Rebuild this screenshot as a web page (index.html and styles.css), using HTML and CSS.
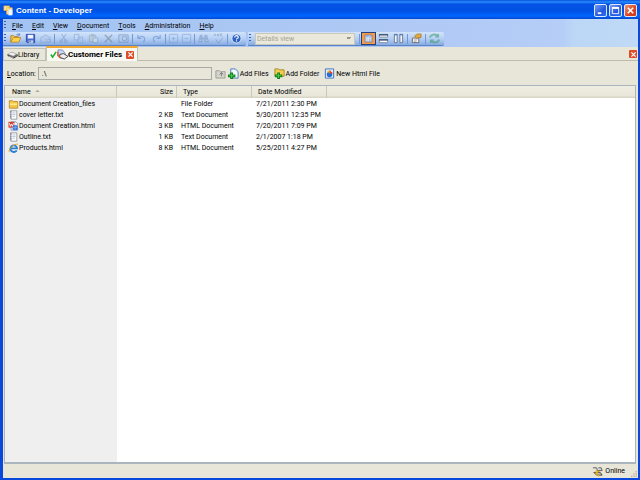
FILE: index.html
```
<!DOCTYPE html>
<html lang="en">
<head>
<meta charset="utf-8">
<title>Content - Developer</title>
<link rel="stylesheet" href="styles.css">
</head>
<body>
<svg class="defs" aria-hidden="true">
<symbol id="folder" viewBox="0 0 12 12"><path d="M1 2h4l1 1h5v8H1z" fill="#f4c643" stroke="#b48a26"/><path d="M1.500 5.500h9v1.500h-9z" fill="#fff0a0"/></symbol>
<symbol id="txt" viewBox="0 0 12 12"><path d="M3 1h7v10H3z" fill="#fff" stroke="#8d9198"/><path d="M2.500 1v10" stroke="#687686" stroke-width="1.500" stroke-dasharray="1 1"/><path d="M4.500 3.500h4m-4 2h4m-4 2h3" stroke="#8a9fc0" stroke-width=".7"/></symbol>
<symbol id="html" viewBox="0 0 12 12"><path d="M3 1h6l2 2v8H3z" fill="#eef4ff" stroke="#7d94bd"/><path d="M0 1h7v7H0z" fill="#d33b2d"/><path d="M1 2.500l1.200 4 1.300-3 1.300 3 1.200-4" fill="none" stroke="#fff"/><circle cx="8" cy="8" r="3.200" fill="#3873d2"/><path d="M5 8h6M8 5v6" stroke="#a9d3ff" stroke-width=".6"/></symbol>
<symbol id="ie" viewBox="0 0 12 12"><path d="M9.800 8.800A4 4 0 1 1 10.300 6.500H3" fill="none" stroke="#287fd6" stroke-width="2.200"/><path d="M1 11C-1 8 7 0 11.500 1.500" fill="none" stroke="#e3a72c" stroke-width="1.200"/></symbol>
<symbol id="disk" viewBox="0 0 12 12"><path d="M1.500 1.500h9v9h-8l-1-1z" fill="#4a6ed0" stroke="#2b469f"/><path d="M3 2h6v4H3z" fill="#eef3ff"/><path d="M4 8h5v3H4z" fill="#b9cbe9"/><path d="M5 8.500h1V10H5z" fill="#2b469f"/></symbol>
<symbol id="stack" viewBox="0 0 12 12"><path d="M0 6l5-3 7 3-4 4-7-2z" fill="#777"/><path d="M1 5.500l4-2 5 2-3 2z" fill="#eee"/><path d="M1 7l6 3 5-3" fill="none" stroke="#333"/><path d="M2 8l5 2" stroke="#ddd" stroke-width=".7"/></symbol>
<symbol id="close" viewBox="0 0 10 10"><path d="M2 2l6 6m0-6L2 8" stroke="#fff" stroke-width="1.800"/></symbol>
<symbol id="app" viewBox="0 0 12 12"><path d="M1 1h6v5H1zM4 3h6v7H4z" fill="#ffe99c" stroke="#e3ad42" stroke-width=".8"/><path d="M6 5h4v6H6z" fill="#fff" stroke="#c9dcf4" stroke-width=".7"/></symbol>
</svg>
<header class="titlebar">
<svg class="icon"><use href="#app"/></svg>
<h1>Content - Developer</h1>
<button class="win" aria-label="Minimize"><svg viewBox="0 0 10 10"><path d="M2 8h4" stroke="#fff" stroke-width="2"/></svg></button>
<button class="win" aria-label="Maximize"><svg viewBox="0 0 10 10"><path d="M1.500 2.500h7v6h-7z" fill="none" stroke="#fff"/><path d="M1 2h8" stroke="#fff" stroke-width="2"/></svg></button>
<button class="win red" aria-label="Close"><svg><use href="#close"/></svg></button>
</header>
<div class="frame">
<div class="bars">
<nav class="menu"><span class="grip"></span>
<button><u>F</u>ile</button><button><u>E</u>dit</button><button><u>V</u>iew</button><button><u>D</u>ocument</button><button><u>T</u>ools</button><button><u>A</u>dministration</button><button><u>H</u>elp</button>
</nav>
<div class="tools">
<div class="strip"><span class="grip"></span>
<button aria-label="Open"><svg viewBox="0 0 12 12"><path d="M1 10V3h3l1 1h4v2" fill="#fbd566" stroke="#a87917"/><path d="M1 10l2.500-5H12l-2.500 5z" fill="#ffd352" stroke="#b07e18" stroke-width=".8"/><path d="M7 2q2-2 3.500 0V.500m0 2H8.500" fill="none" stroke="#426fb4" stroke-width=".8"/></svg></button>
<button aria-label="Save"><svg><use href="#disk"/></svg></button>
<button aria-label="Check in" disabled><svg viewBox="0 0 12 12"><path d="M1 5l5-3 5 3v5H1zM5 6l4 4M8 7h3v3" fill="#b7cae8" stroke="#7897c8"/></svg></button>
<i class="sep"></i>
<button aria-label="Cut" disabled><svg viewBox="0 0 12 12" fill="none" stroke="#5e80ba"><path d="M4 1l4 7M9 1L4 8"/><circle cx="3.500" cy="9" r="1.500"/><circle cx="8.500" cy="9" r="1.500"/></svg></button>
<button aria-label="Copy" disabled><svg viewBox="0 0 12 12" fill="#cbdcf5" stroke="#7697cb"><path d="M1.500 1.500h5v6h-5zM5.500 4.500h5v6h-5z"/><path d="M7 6.500h2M7 8.500h2"/></svg></button>
<button aria-label="Paste" disabled><svg viewBox="0 0 12 12" fill="#c4c9bd" stroke="#8298ad"><path d="M1.500 2.500h7v7h-7zM3.500 1.500h3v2h-3z"/><path d="M5.500 5.500h5v5h-5z" fill="#dce6f3"/></svg></button>
<button aria-label="Delete" disabled><svg viewBox="0 0 12 12"><path d="M2 2l8 8M10 2L2 10" stroke="#72777c" stroke-width="1.500"/></svg></button>
<button aria-label="Preview" disabled><svg viewBox="0 0 12 12" fill="#b7cde8" stroke="#5b7ca9"><path d="M1 2h10v8H1z"/><circle cx="7" cy="6" r="2.500"/></svg></button>
<i class="sep"></i>
<button aria-label="Undo" disabled><svg viewBox="0 0 12 12" fill="none" stroke="#5381c8" stroke-width="1.300"><path d="M2 2v4h4M2 6c5-5 10-1 6 4"/></svg></button>
<button aria-label="Redo" disabled><svg viewBox="0 0 12 12" fill="none" stroke="#5381c8" stroke-width="1.300"><path d="M10 2v4H6m4 0C5 1 0 5 4 10"/></svg></button>
<i class="sep"></i>
<button class="slim" aria-label="Expand" disabled><svg viewBox="0 0 12 12" fill="none" stroke="#6f94d0"><path d="M1.500 1.500h9v9h-9zM6 4v4M4 6h4"/></svg></button>
<button class="slim" aria-label="Collapse" disabled><svg viewBox="0 0 12 12" fill="none" stroke="#6f94d0"><path d="M1.500 1.500h9v9h-9zM4 6h4"/></svg></button>
<i class="sep"></i>
<button aria-label="Find" disabled><svg viewBox="0 0 12 12" fill="#7893be"><path d="M2 2h3v3h2V2h3l2 8H7V7H5v3H0z"/><path d="M1.500 8h2M8.500 8h2" stroke="#c8dbf5"/></svg></button>
<button aria-label="Spelling" disabled><svg viewBox="0 0 12 12" fill="none" stroke="#6988ae"><path d="M1 3l1-2 1 2M5 1v2h1V1M10 1H8v2h2M3 7l3 4 5-6" /></svg></button>
<i class="sep"></i>
<button aria-label="Help"><svg viewBox="0 0 12 12"><circle cx="6" cy="6" r="5" fill="#2d62c5" stroke="#e4edfb"/><path d="M4 5c0-3 4-2.500 4-.500C8 6 6 5.500 6 7M6 8v1.200" stroke="#fff" fill="none" stroke-width="1.200"/></svg></button>
</div>
<div class="strip"><span class="grip"></span>
<select aria-label="View" disabled><option>Details view</option></select>
<i class="sep"></i>
<button class="on" aria-label="Details"><svg viewBox="0 0 12 12"><path d="M1.500 1.500h9v9h-9z" fill="#fff" stroke="#5472a5"/><path d="M2 3h8M4 2v8" stroke="#6b9ad8"/><path d="M6 5h3M6 7h3M6 9h3" stroke="#6289c0"/></svg></button>
<button aria-label="Split rows"><svg viewBox="0 0 12 12"><path d="M1.500 1.500h9v3h-9zM1.500 7.500h9v3h-9z" fill="#fff" stroke="#7d8ba1"/><path d="M1 2h10M1 7.500h10" stroke="#344869" stroke-width="1.500"/></svg></button>
<button aria-label="Split columns"><svg viewBox="0 0 12 12"><path d="M1.500 1.500h3v9h-3zM7.500 1.500h3v9h-3z" fill="#eff5ff" stroke="#65758f"/><path d="M1 2h4M7 2h4" stroke="#4775b4"/></svg></button>
<i class="sep"></i>
<button aria-label="Properties"><svg viewBox="0 0 12 12"><path d="M1.500 5.500h7v5h-7z" fill="#fff" stroke="#666"/><path d="M3 7.500h4M3 9h3" stroke="#777" stroke-width=".7"/><path d="M4 3l3-2h4v4H8L6 6z" fill="#e6a83a" stroke="#9b712a" stroke-width=".7"/></svg></button>
<i class="sep"></i>
<button aria-label="Refresh" disabled><svg viewBox="0 0 12 12" fill="none" stroke="#32945b" stroke-width="2"><path d="M1 5c1-4 6-4 8-2M10 1v3H7M11 7c-1 4-6 4-8 2M2 11V8h3"/></svg></button>
</div>
</div>
</div>
<div class="tabs">
<button class="tab"><svg class="icon"><use href="#stack"/></svg>Library</button>
<div class="tab active"><svg class="check" viewBox="0 0 8 10"><path d="M1 5l2 3 4-6" fill="none" stroke="#15ae27" stroke-width="1.700"/></svg><svg class="icon" viewBox="0 0 12 12"><path d="M1 1h5l3 4v5H4L1 7z" fill="#c9d6f5" stroke="#858baa"/><path d="M3 6l4-1 5 3-4 3-5-2z" fill="#eee" stroke="#444"/><path d="M1 3v4l3 3" stroke="#d55c38" fill="none" stroke-width="1.500"/></svg><span>Customer Files</span><button class="x" aria-label="Close tab"><svg><use href="#close"/></svg></button></div>
<button class="x last" aria-label="Close pane"><svg><use href="#close"/></svg></button>
</div>
<main class="page">
<div class="location">
<label for="loc"><u>L</u>ocation:</label><input id="loc" type="text" value=".\" readonly>
<button class="up" aria-label="Up" disabled><svg class="icon" viewBox="0 0 12 12"><path d="M1 3h4l1 1h5v7H1z" fill="#d5d4cc" stroke="#9c9c96"/><path d="M7 9V5M5 7l2-2 2 2" fill="none" stroke="#777"/></svg></button>
<button><svg class="icon" viewBox="0 0 12 12"><path d="M3 1h5l3 3v7H3z" fill="#f5f9ff" stroke="#3c78bd"/><path d="M4 5v7M0 8.500h8" stroke="#087b17" stroke-width="3"/><path d="M4 6v5M1 8.500h6" stroke="#50d34e"/></svg>Add Files</button>
<button><svg class="icon" viewBox="0 0 12 12"><path d="M1 1h4l1 1h5v7H1z" fill="#f3cf50" stroke="#a68325"/><path d="M5 5v7M1 8.500h8" stroke="#087b17" stroke-width="3"/><path d="M5 6v5M2 8.500h6" stroke="#50d34e"/></svg>Add Folder</button>
<button><svg class="icon" viewBox="0 0 12 12"><path d="M1.500 1h9v10h-9z" fill="#e7f0ff" stroke="#386dbb"/><circle cx="6" cy="7" r="3" fill="#286dd0"/><path d="M6 6V2l4 4z" fill="#e34525"/><path d="M3 3h3v3z" fill="#edb330"/></svg>New Html File</button>
</div>
<div class="list">
<table>
<colgroup><col class="c1"><col class="c2"><col class="c3"><col class="c4"><col></colgroup>
<thead><tr><th>Name <svg class="sort" viewBox="0 0 6 4"><path d="M0 4l3-3 3 3z" fill="#aaa99a"/></svg></th><th class="num">Size</th><th>Type</th><th>Date Modified</th><th class="rest"></th></tr></thead>
<tbody>
<tr><td><svg class="icon"><use href="#folder"/></svg>Document Creation_files</td><td class="num"></td><td>File Folder</td><td>7/21/2011 2:30 PM</td><td></td></tr>
<tr><td><svg class="icon"><use href="#txt"/></svg>cover letter.txt</td><td class="num">2 KB</td><td>Text Document</td><td>5/30/2011 12:35 PM</td><td></td></tr>
<tr><td><svg class="icon"><use href="#html"/></svg>Document Creation.html</td><td class="num">3 KB</td><td>HTML Document</td><td>7/20/2011 7:09 PM</td><td></td></tr>
<tr><td><svg class="icon"><use href="#txt"/></svg>Outline.txt</td><td class="num">1 KB</td><td>Text Document</td><td>2/1/2007 1:18 PM</td><td></td></tr>
<tr><td><svg class="icon"><use href="#ie"/></svg>Products.html</td><td class="num">8 KB</td><td>HTML Document</td><td>5/25/2011 4:27 PM</td><td></td></tr>
</tbody>
</table>
</div>
</main>
<footer class="status"><svg class="icon" viewBox="0 0 12 12"><path d="M1 2h4l1 3h5l-1-3H7" fill="#ddd" stroke="#555"/><path d="M2 7h7l2 3H5z" fill="#bbb" stroke="#444"/><path d="M4 5l3 1-3 2 4 3" fill="none" stroke="#dfab18" stroke-width="1.500"/></svg><span>Online</span><svg class="size" viewBox="0 0 8 8"><path d="M6 0h2v2H6zM3 3h2v2H3zM6 3h2v2H6zM0 6h2v2H0zM3 6h2v2H3zM6 6h2v2H6z" fill="#bdbba8"/></svg></footer>
</div>
</body>
</html>
```
FILE: styles.css
```
* { box-sizing: border-box; }
body {
  margin: 0;
  height: 100vh;
  display: flex;
  flex-direction: column;
  background: #0848dc;
  color: #000;
  font: 7px/10px Roboto, "Liberation Sans", sans-serif;
}
button, input, select { font: inherit; color: inherit; margin: 0; padding: 0; border: 0; background: none; }
button { display: flex; align-items: center; }
svg { display: block; flex: none; }
u { text-underline-offset: 1px; text-decoration-thickness: 1px; }
.defs { position: absolute; width: 0; height: 0; }
.icon { width: 11px; height: 11px; }

.titlebar {
  height: 19px;
  flex: none;
  display: flex;
  align-items: center;
  gap: 2px;
  padding: 2px 3px 0 3px;
  background: linear-gradient(#0753dc, #2a8bff 2px, #0553e4 4px, #0052e4 11px, #0065ff 16px, #0349cf);
}
h1 { flex: 1; margin: 0; color: #fff; font: 700 8px/12px "Liberation Sans", Arial, sans-serif; }
.win {
  width: 13px;
  height: 13px;
  justify-content: center;
  border: 1px solid #dce8ff;
  border-radius: 2px;
  background: linear-gradient(135deg, #759df5, #2457dc 60%, #2e6df0);
}
.win svg { width: 9px; height: 9px; }
.red { background: linear-gradient(135deg, #ef9477, #dc431e 60%, #c93a16); }

.frame {
  flex: 1;
  min-height: 0;
  display: flex;
  flex-direction: column;
  border: solid #0848dc;
  border-width: 0 2px 2px 3px;
  background: #e7e6d8;
}
.bars { flex: none; background: linear-gradient(90deg, #a2c3f2, #adc8f4 50%, #b5cdf7 88%, #bcd7f6 90%, #bfd9f6); }
.menu { display: flex; align-items: center; height: 13px; padding-left: 1px; gap: 9px; }
.menu .grip { margin-right: -3px; }
.grip {
  width: 2px;
  height: 9px;
  flex: none;
  background: repeating-linear-gradient(#3f62a6 0 1px, transparent 1px 3px);
}
.tools { display: flex; gap: 2px; height: 15px; }
.strip {
  display: flex;
  align-items: center;
  height: 14px;
  padding: 0 2px 0 1px;
  border-bottom: 1px solid #5b83c4;
  border-radius: 0 2px 2px 0;
  background: linear-gradient(#d3e4fb, #b2cdf3 55%, #86abe2);
}
.strip .grip { margin-right: 2px; }
.strip button { width: 15px; height: 13px; justify-content: center; }
.strip button svg { width: 11px; height: 11px; }
.strip button:disabled { opacity: .5; }
.strip .slim { width: 13px; }
.sep { width: 1px; height: 10px; margin: 0 1px; background: #7297d1; flex: none; }
.strip select {
  width: 100px;
  height: 12px;
  margin: 0 3px 0 2px;
  padding: 0 1px;
  appearance: none;
  border: 1px solid #c9c7b8;
  opacity: 1;
  color: #a5a393;
  background-color: #e9e8da;
  background-image: linear-gradient(45deg, transparent 50%, #99978a 50%), linear-gradient(-45deg, transparent 50%, #99978a 50%);
  background-size: 3px 3px;
  background-repeat: no-repeat;
  background-position: right 5px center, right 2px center;
}
.strip .on { border: 1px solid #24427f; background: #f39a4b; }
.strip .on svg { width: 9px; height: 9px; }

.tabs { display: flex; align-items: flex-end; height: 14px; flex: none; border-bottom: 1px solid #bdbbae; }
.tab { display: flex; align-items: center; height: 13px; }
.tabs > .tab:first-child { padding: 0 5px 0 3px; border: 1px solid #c4c2b5; border-width: 1px 1px 0; width: 43px; height: 12px; }
.active {
  height: 15px;
  margin-bottom: -1px;
  padding: 0 3px;
  border: 1px solid #c4c2b5;
  border-top: 2px solid #f0a830;
  border-bottom: 0;
  background: #f8f8f3;
}
.active span { margin: 0 4px 0 0; font-size: 8px; font-weight: 700; }
.check { width: 7px; height: 9px; }
.x { width: 8px; height: 8px; justify-content: center; border-radius: 1px; background: #e04c28; }
.x svg { width: 7px; height: 7px; }
.last { margin: 0 1px 2px auto; }

.page { flex: 1; min-height: 0; display: flex; flex-direction: column; padding: 1px 2px 0 1px; }
.location { display: flex; align-items: center; height: 23px; gap: 5px; padding-left: 3px; flex: none; }
.location label { margin-right: -3px; }
.location input { width: 174px; height: 13px; padding: 0 3px; border: 1px solid #a9aaa3; border-radius: 0; }
.location button { gap: 1px; }
.location .up { margin: 0 -3px 0 -2px; }
.list {
  flex: 1;
  min-height: 0;
  border: 1px solid #aab5bd;
  border-bottom-width: 2px;
  background: linear-gradient(#efefef, #efefef) no-repeat 0 0 / 112px 100%, #fff;
}
table { width: 100%; border-collapse: separate; border-spacing: 0; table-layout: fixed; }
.c1 { width: 112px; }
.c2 { width: 60px; }
.c3 { width: 75px; }
.c4 { width: 75px; }
th {
  height: 12px;
  padding: 0 0 0 6px;
  text-align: left;
  font-weight: 400;
  background: linear-gradient(90deg, transparent calc(100% - 1px), #c9c7b8 0), linear-gradient(#eeede2, #e8e7d9 80%, #d4d1bf);
}
th:first-child { padding-left: 7px; }
.sort { display: inline-block; width: 5px; height: 3px; margin: 0 0 2px 3px; }
.rest { background: linear-gradient(#eeede2, #e8e7d9 80%, #d4d1bf); }
td { height: 11px; padding: 0 0 0 4px; white-space: nowrap; line-height: 10px; }
td:first-child { padding-left: 3px; }
td .icon { float: left; height: 10px; }
th.num, td.num { text-align: right; padding-right: 4px; }

.status { height: 14px; flex: none; display: flex; align-items: center; justify-content: flex-end; gap: 2px; }
.size { width: 6px; height: 6px; margin: 6px 1px 0 4px; }
```
